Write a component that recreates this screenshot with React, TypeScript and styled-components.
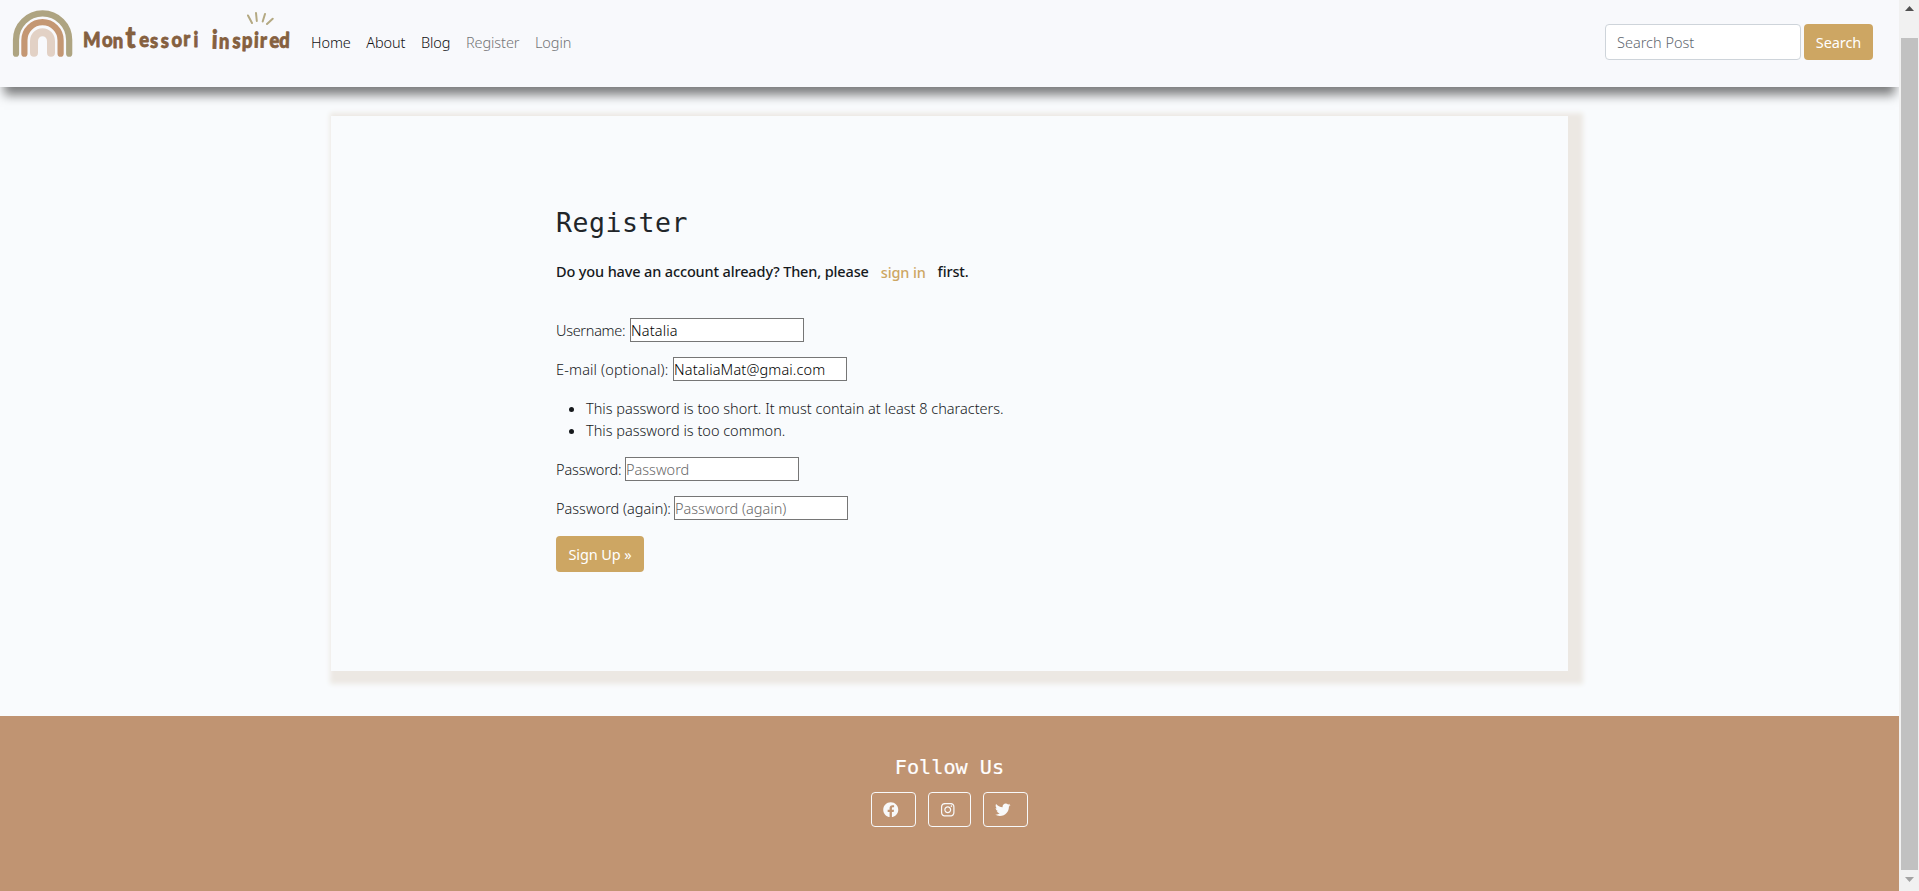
import React from "react";
import styled, { createGlobalStyle } from "styled-components";
import { FaFacebook, FaInstagram, FaTwitter } from "react-icons/fa";

const GlobalStyle = createGlobalStyle`
  *, *::before, *::after { box-sizing: border-box; }
  body {
    margin: 0;
    overflow: hidden;
    background: #f9fbfd;
    color: #16191c;
    font-family: "Noto Sans", "Open Sans", sans-serif;
    font-size: 14.5px;
    font-weight: 300;
    line-height: 22px;
  }
  input, button { font: inherit; }
`;

const Viewport = styled.div`
  display: flex;
  height: 891px;
`;

const Page = styled.div`
  flex: 1;
  min-width: 0;
  display: flex;
  flex-direction: column;
  overflow: hidden;
`;

const Header = styled.header`
  position: relative;
  z-index: 1;
  flex: none;
  display: flex;
  align-items: flex-start;
  height: 87px;
  padding-right: 26px;
  background: #f8f9fc;
  box-shadow: 0 12px 10px -4px rgba(0, 0, 0, 0.5);
`;

const Logo = styled.svg`
  flex: none;
  display: block;
`;

const Nav = styled.nav`
  display: flex;
  gap: 15.5px;
  margin: 31px auto 0 11px;
`;

const NavLink = styled.a<{ $muted?: boolean }>`
  color: ${({ $muted }) => ($muted ? "#747577" : "#111213")};
  letter-spacing: -0.08px;
  text-decoration: none;
`;

const SearchForm = styled.form`
  display: flex;
  gap: 3px;
  margin-top: 24px;
`;

const SearchInput = styled.input`
  width: 196px;
  height: 36px;
  padding: 0 11px;
  border: 1px solid #ced4da;
  border-radius: 4px;
  background: #fff;
  &::placeholder { color: #5f6870; opacity: 1; }
`;

const GoldButton = styled.button<{ $width: number }>`
  width: ${({ $width }) => $width}px;
  height: 36px;
  padding: 0 0 1px;
  border: 0;
  border-radius: 4px;
  background: #cda663;
  color: #fff;
  font-weight: 400;
  letter-spacing: -0.1px;
`;

const Card = styled.main`
  flex: none;
  width: 1237px;
  height: 555px;
  margin: 29px 0 45px 331px;
  padding: 87px 225px 0;
  background: #f9fbfd;
  box-shadow: 7px 5px 5px 8px #ece8e3;
`;

const Title = styled.h1`
  margin: 0;
  color: #212529;
  font: 400 26.5px/40px "DejaVu Sans Mono", monospace;
  letter-spacing: 0.55px;
`;

const SignInPrompt = styled.p`
  display: flex;
  margin: 17px 0 36px;
  font-weight: 500;
  letter-spacing: -0.14px;
`;

const SignInLink = styled.a`
  margin: 1px 12px -1px;
  color: #cda663;
  text-decoration: none;
`;

const Form = styled.form`
  display: flex;
  flex-direction: column;
  align-items: flex-start;
  gap: 15px;
`;

const Field = styled.label<{ $labelWidth: number; $tracking?: number }>`
  display: grid;
  grid-template-columns: ${({ $labelWidth }) => $labelWidth}px 174px;
  align-items: center;
  height: 24px;
  letter-spacing: ${({ $tracking = 0 }) => $tracking}px;
  white-space: nowrap;
`;

const TextInput = styled.input`
  width: 174px;
  height: 24px;
  padding: 0;
  border: 1px solid #767676;
  background: #fff;
  color: #000;
  letter-spacing: 0.15px;
  &::placeholder { color: #686868; letter-spacing: 0; opacity: 1; }
`;

const ErrorList = styled.ul`
  margin: 1px 0 0;
  padding: 0 0 1px 30px;
`;

const SubmitRow = styled.div`
  margin-top: 1px;
`;

const Footer = styled.footer`
  flex: 1;
  display: flex;
  flex-direction: column;
  align-items: center;
  padding-top: 36px;
  background: #c09472;
  color: #fff;
`;

const FooterTitle = styled.h2`
  margin: 0 0 10px;
  font: 400 20.2px/30px "DejaVu Sans Mono", monospace;
  -webkit-text-stroke: 0.2px #fff;
`;

const SocialLinks = styled.div`
  display: flex;
  gap: 12px;
`;

const SocialLink = styled.a<{ $width: number }>`
  display: flex;
  align-items: center;
  width: ${({ $width }) => $width}px;
  height: 35px;
  padding-left: 11px;
  border: 1px solid #f8f9fa;
  border-radius: 4px;
  color: #f8f9fa;
  svg { width: auto; height: 15.5px; }
`;

const ScrollTrack = styled.div`
  flex: none;
  display: flex;
  flex-direction: column;
  align-items: center;
  width: 20px;
  padding: 6px 1px 8px 2px;
  background: #f1f1f1;
`;

const ScrollThumb = styled.div`
  width: 17px;
  height: 832px;
  margin: 27px 0 7px;
  background: #c1c1c1;
`;

const ScrollArrow = styled.svg`
  flex: none;
  display: block;
`;

function BrandLogo() {
  return (
    <Logo width="300" height="70" viewBox="0 0 300 70" role="img">
      <g fill="none" strokeLinecap="round">
        <path d="M16 53.7V40a26.6 26.6 0 0 1 53.2 0v13.7" stroke="#aea481" strokeWidth="6.2" />
        <path d="M24.4 53.7V40.3a18.1 18.1 0 0 1 36.2 0v13.4" stroke="#c49773" strokeWidth="6.2" />
        <path d="M34 52.8V41a8.5 8.8 0 0 1 17 0v11.8" stroke="#e2d1c5" strokeWidth="8" />
        <path d="M248 15.5l4 7.5M256 13l.8 8M265 14l-2.3 7.5M272.7 18.7l-5.7 5.3" stroke="#b4a982" strokeWidth="2" />
      </g>
      <g
        transform="scale(.86 1)"
        fill="#85603f"
        stroke="#85603f"
        strokeWidth=".8"
        strokeLinejoin="round"
        fontFamily="Lato, sans-serif"
        fontWeight="900"
        fontSize="21.5"
      >
        <text y="47 47.5 48.5 48.5 47.5 48 48 47 46.5 47.5" x="96.5 118.5 131 146 162 174.5 187 199.5 213 225">
          Mon<tspan fontSize="31">t</tspan>essori
        </text>
        <text y="48.5 48.5 48 47.5 47.5 47.5 47.5 47.5" x="246 254.5 270 281 295 302 313 324.5" rotate="2">
          <tspan fontSize="26">i</tspan>nspired
        </text>
      </g>
    </Logo>
  );
}

export default function App() {
  return (
    <Viewport>
      <GlobalStyle />
      <Page>
        <Header>
          <BrandLogo />
          <Nav>
            <NavLink>Home</NavLink>
            <NavLink>About</NavLink>
            <NavLink>Blog</NavLink>
            <NavLink $muted>Register</NavLink>
            <NavLink $muted>Login</NavLink>
          </Nav>
          <SearchForm>
            <SearchInput placeholder="Search Post" />
            <GoldButton type="button" $width={69}>Search</GoldButton>
          </SearchForm>
        </Header>
        <Card>
          <Title>Register</Title>
          <SignInPrompt>
            Do you have an account already? Then, please
            <SignInLink>sign in</SignInLink>
            first.
          </SignInPrompt>
          <Form>
            <Field $labelWidth={74} $tracking={-0.3}>
              Username: <TextInput defaultValue="Natalia" />
            </Field>
            <Field $labelWidth={117} $tracking={0.16}>
              E-mail (optional): <TextInput defaultValue="NataliaMat@gmai.com" />
            </Field>
            <ErrorList>
              <li>This password is too short. It must contain at least 8 characters.</li>
              <li>This password is too common.</li>
            </ErrorList>
            <Field $labelWidth={69} $tracking={-0.15}>
              Password: <TextInput placeholder="Password" />
            </Field>
            <Field $labelWidth={118}>
              Password (again): <TextInput placeholder="Password (again)" />
            </Field>
            <SubmitRow>
              <GoldButton type="button" $width={88}>Sign Up »</GoldButton>
            </SubmitRow>
          </Form>
        </Card>
        <Footer>
          <FooterTitle>Follow Us</FooterTitle>
          <SocialLinks>
            <SocialLink $width={45}><FaFacebook /></SocialLink>
            <SocialLink $width={43}><FaInstagram /></SocialLink>
            <SocialLink $width={45}><FaTwitter /></SocialLink>
          </SocialLinks>
        </Footer>
      </Page>
      <ScrollTrack>
        <ScrollArrow width="9" height="5" viewBox="0 0 9 5"><path d="M0 5L4.5 0L9 5z" fill="#505050" /></ScrollArrow>
        <ScrollThumb />
        <ScrollArrow width="9" height="5" viewBox="0 0 9 5"><path d="M0 0L4.5 5L9 0z" fill="#a3a3a3" /></ScrollArrow>
      </ScrollTrack>
    </Viewport>
  );
}
